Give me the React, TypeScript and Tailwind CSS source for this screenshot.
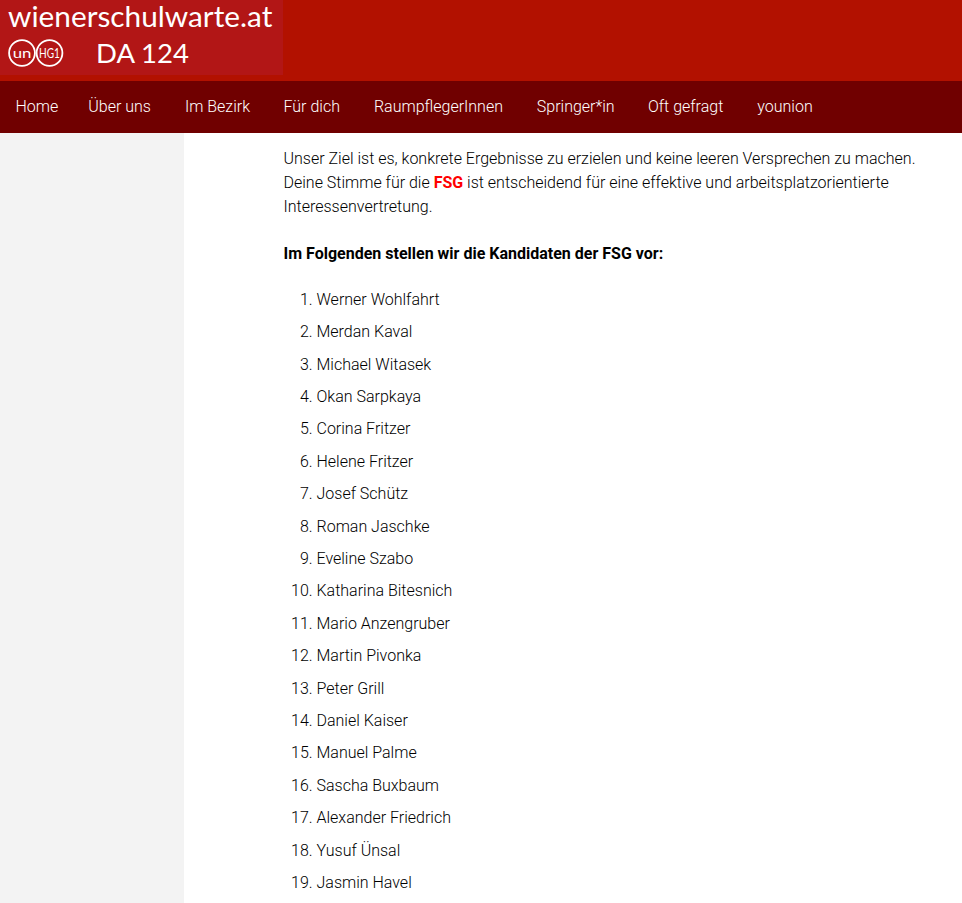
const navItems = [
  { label: "Home", className: "ml-[15.5px]" },
  { label: "Über uns", className: "ml-[30px]" },
  { label: "Im Bezirk", className: "ml-[34px]" },
  { label: "Für dich", className: "ml-[33.5px]" },
  { label: "RaumpflegerInnen", className: "ml-[34px]" },
  { label: "Springer*in", className: "ml-[33.8px]" },
  { label: "Oft gefragt", className: "ml-[33.3px]" },
  { label: "younion", className: "ml-[34px]" },
];

const candidates = [
  "Werner Wohlfahrt",
  "Merdan Kaval",
  "Michael Witasek",
  "Okan Sarpkaya",
  "Corina Fritzer",
  "Helene Fritzer",
  "Josef Schütz",
  "Roman Jaschke",
  "Eveline Szabo",
  "Katharina Bitesnich",
  "Mario Anzengruber",
  "Martin Pivonka",
  "Peter Grill",
  "Daniel Kaiser",
  "Manuel Palme",
  "Sascha Buxbaum",
  "Alexander Friedrich",
  "Yusuf Ünsal",
  "Jasmin Havel",
];

function UnionLogo() {
  return (
    <svg width="56" height="30" viewBox="0 0 56 30" fill="none" stroke="white" strokeWidth="1.8">
      <circle cx="14" cy="15" r="12.9" />
      <circle cx="41.5" cy="15" r="12.9" />
      <text transform="translate(14 19.5) scale(1.2 1)" textAnchor="middle" fontSize="14" fontFamily="Lato, sans-serif" fill="white" stroke="none">
        un
      </text>
      <text transform="translate(41.5 19.8) scale(0.72 1)" textAnchor="middle" fontSize="14" fontFamily="Lato, sans-serif" fill="white" stroke="none">
        HG1
      </text>
    </svg>
  );
}

export default function App() {
  return (
    <div className="h-[903px] overflow-hidden bg-white font-['Roboto',sans-serif] text-[16px] leading-[24px] font-light text-black">
      <header className="h-[81px] bg-[#b21100]">
        <div className="h-[75px] w-[283px] bg-[#b21616] pl-[8px] text-white font-['Lato',sans-serif] font-normal">
          <div className="text-[29.8px] leading-[32px] whitespace-nowrap">wienerschulwarte.at</div>
          <div className="mt-[6px] flex items-center">
            <UnionLogo />
            <span className="ml-[32px] text-[27.5px] leading-[30px]">DA 124</span>
          </div>
        </div>
      </header>

      <nav className="flex h-[52px] items-center bg-[#700000] text-white">
        {navItems.map((item) => (
          <a key={item.label} className={item.className}>
            {item.label}
          </a>
        ))}
      </nav>

      <div className="flex">
        <aside className="h-[770px] w-[184px] shrink-0 bg-[#f3f3f3]" />
        <main className="pl-[99.5px] pr-[40px] pt-[14px]">
          <p>
            Unser Ziel ist es, konkrete Ergebnisse zu erzielen und keine leeren Versprechen zu machen.
            <br />
            Deine Stimme für die <strong className="font-bold text-[#f00]">FSG</strong> ist entscheidend für eine effektive und arbeitsplatzorientierte Interessenvertretung.
          </p>
          <p className="mt-[23px] font-bold">Im Folgenden stellen wir die Kandidaten der FSG vor:</p>
          <ol className="mt-[21.9px] list-decimal pl-[33px]">
            {candidates.map((name) => (
              <li key={name} className="mb-[8.4px]">
                {name}
              </li>
            ))}
          </ol>
        </main>
      </div>
    </div>
  );
}
